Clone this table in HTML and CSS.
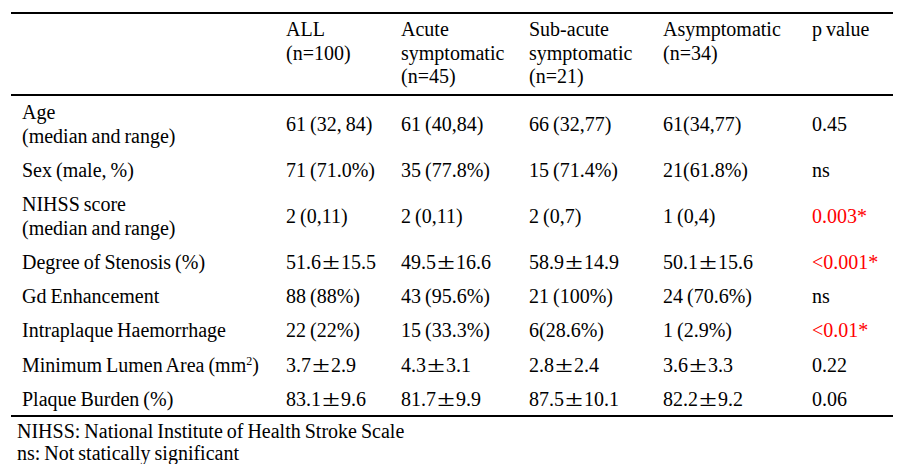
FILE: index.html
```html
<!DOCTYPE html>
<html lang="en">
<head>
<meta charset="utf-8">
<title>Table</title>
<link rel="stylesheet" href="styles.css">
</head>
<body>
<div class="page">
  <table class="data">
    <colgroup>
      <col class="c-label">
      <col class="c-all">
      <col class="c-acute">
      <col class="c-sub">
      <col class="c-asym">
      <col class="c-p">
    </colgroup>
    <thead>
      <tr>
        <th></th>
        <th>ALL<br>(n=100)</th>
        <th>Acute<br>symptomatic<br>(n=45)</th>
        <th>Sub-acute<br>symptomatic<br>(n=21)</th>
        <th>Asymptomatic<br>(n=34)</th>
        <th>p value</th>
      </tr>
    </thead>
    <tbody>
      <tr class="first">
        <td>Age<br>(median and range)</td>
        <td>61 (32, 84)</td>
        <td>61 (40,84)</td>
        <td>66 (32,77)</td>
        <td>61(34,77)</td>
        <td>0.45</td>
      </tr>
      <tr>
        <td>Sex (male, %)</td>
        <td>71 (71.0%)</td>
        <td>35 (77.8%)</td>
        <td>15 (71.4%)</td>
        <td>21(61.8%)</td>
        <td>ns</td>
      </tr>
      <tr>
        <td>NIHSS score<br>(median and range)</td>
        <td>2 (0,11)</td>
        <td>2 (0,11)</td>
        <td>2 (0,7)</td>
        <td>1 (0,4)</td>
        <td class="sig">0.003*</td>
      </tr>
      <tr>
        <td>Degree of Stenosis (%)</td>
        <td>51.6<span class="pm">±</span>15.5</td>
        <td>49.5<span class="pm">±</span>16.6</td>
        <td>58.9<span class="pm">±</span>14.9</td>
        <td>50.1<span class="pm">±</span>15.6</td>
        <td class="sig">&lt;0.001*</td>
      </tr>
      <tr>
        <td>Gd Enhancement</td>
        <td>88 (88%)</td>
        <td>43 (95.6%)</td>
        <td>21 (100%)</td>
        <td>24 (70.6%)</td>
        <td>ns</td>
      </tr>
      <tr>
        <td>Intraplaque Haemorrhage</td>
        <td>22 (22%)</td>
        <td>15 (33.3%)</td>
        <td>6(28.6%)</td>
        <td>1 (2.9%)</td>
        <td class="sig">&lt;0.01*</td>
      </tr>
      <tr>
        <td>Minimum Lumen Area (mm<sup>2</sup>)</td>
        <td>3.7<span class="pm">±</span>2.9</td>
        <td>4.3<span class="pm">±</span>3.1</td>
        <td>2.8<span class="pm">±</span>2.4</td>
        <td>3.6<span class="pm">±</span>3.3</td>
        <td>0.22</td>
      </tr>
      <tr>
        <td>Plaque Burden (%)</td>
        <td>83.1<span class="pm">±</span>9.6</td>
        <td>81.7<span class="pm">±</span>9.9</td>
        <td>87.5<span class="pm">±</span>10.1</td>
        <td>82.2<span class="pm">±</span>9.2</td>
        <td>0.06</td>
      </tr>
    </tbody>
  </table>
  <div class="notes">
    <p>NIHSS: National Institute of Health Stroke Scale</p>
    <p>ns: Not statically significant</p>
  </div>
</div>
</body>
</html>
```

FILE: styles.css
```css
html, body {
  margin: 0;
  padding: 0;
  background: #ffffff;
}

body {
  font-family: "Liberation Serif", "Times New Roman", serif;
  font-size: 20px;
  color: #000000;
  word-spacing: -1px;
}

.page {
  padding: 12px 9px 0 11px;
}

.data {
  width: 882px;
  border-collapse: separate;
  border-spacing: 0;
  table-layout: fixed;
  border-top: 2px solid #000;
  border-bottom: 2px solid #000;
}

.c-label { width: 264px; }
.c-all { width: 115px; }
.c-acute { width: 128px; }
.c-sub { width: 134px; }
.c-asym { width: 149px; }
.c-p { width: 92px; }

.data th {
  font-weight: normal;
  text-align: left;
  vertical-align: top;
  line-height: 23.5px;
  padding: 4px 0 5.5px 11px;
  border-bottom: 2px solid #000;
  white-space: nowrap;
}

.data td {
  text-align: left;
  vertical-align: middle;
  line-height: 24px;
  padding: 6.2px 0 4px 11px;
  white-space: nowrap;
}

.data tr.first td {
  padding-top: 3.5px;
}

.sig {
  color: #ff0000;
}

.pm {
  display: inline-block;
  width: 20px;
  text-align: center;
  transform: scale(1.6, 1.15);
  transform-origin: 50% 78%;
}

sup {
  font-size: 12px;
  line-height: 0;
  vertical-align: 7px;
}

.notes {
  padding: 3px 0 0 6px;
}

.notes p {
  margin: 0;
  line-height: 22px;
}
```
